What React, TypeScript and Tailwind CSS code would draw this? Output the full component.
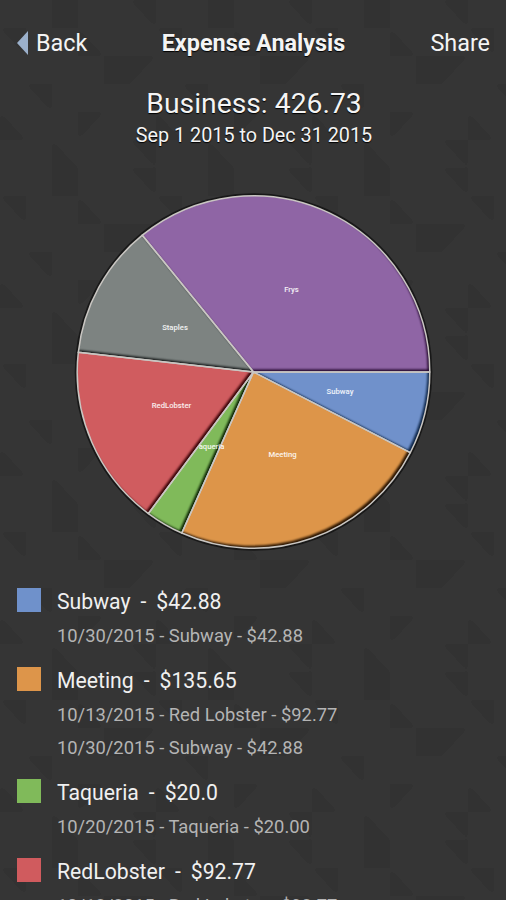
interface Expense {
  date: string
  name: string
  amount: string
}

interface Category {
  name: string
  total: string
  color: string
  shade: string
  start: number
  end: number
  labelX: number
  labelY: number
  expenses: Expense[]
}

const categories: Category[] = [
  {
    name: "Subway", total: "$42.88", color: "#6f91cb", shade: "#0c2446",
    start: 0, end: 27.2, labelX: 340, labelY: 393.5,
    expenses: [{ date: "10/30/2015", name: "Subway", amount: "$42.88" }],
  },
  {
    name: "Meeting", total: "$135.65", color: "#dd954a", shade: "#2a1400",
    start: 27.2, end: 114, labelX: 282.5, labelY: 456.5,
    expenses: [
      { date: "10/13/2015", name: "Red Lobster", amount: "$92.77" },
      { date: "10/30/2015", name: "Subway", amount: "$42.88" },
    ],
  },
  {
    name: "Taqueria", total: "$20.0", color: "#80ba5a", shade: "#0c2404",
    start: 114, end: 126.6, labelX: 209.5, labelY: 449,
    expenses: [{ date: "10/20/2015", name: "Taqueria", amount: "$20.00" }],
  },
  {
    name: "RedLobster", total: "$92.77", color: "#d05b5e", shade: "#3a0408",
    start: 126.6, end: 186.4, labelX: 171.5, labelY: 407.5,
    expenses: [{ date: "10/13/2015", name: "Red Lobster", amount: "$92.77" }],
  },
  {
    name: "Staples", total: "$70.43", color: "#7d8381", shade: "#101414",
    start: 186.4, end: 230.9, labelX: 175, labelY: 329.5,
    expenses: [],
  },
  {
    name: "Frys", total: "$200.77", color: "#8f65a5", shade: "#1e0428",
    start: 230.9, end: 360, labelX: 291.5, labelY: 291.5,
    expenses: [],
  },
]

const CX = 253.5
const CY = 372
const R = 176.3

function point(deg: number) {
  const rad = (deg * Math.PI) / 180
  return `${(CX + R * Math.cos(rad)).toFixed(2)} ${(CY + R * Math.sin(rad)).toFixed(2)}`
}

function slicePath(c: Category) {
  return `M${CX} ${CY} L${point(c.start)} A${R} ${R} 0 0 1 ${point(c.end)} Z`
}

function Background() {
  return (
    <svg className="absolute inset-0 -z-10 h-full w-full" aria-hidden="true">
      <defs>
        <pattern id="tiles" width="156" height="168" patternUnits="userSpaceOnUse">
          <rect width="156" height="168" fill="#353535" />
          <path fill="#323232" d="M0 28h26v28zM52 0h26v28H52zM78 28l26 28H78zM104 56h52l-26 28h-26zM26 84h26v28zM0 112l26 28H0zM78 112h26l-26 28zM130 140h26v28zM52 140l26 28H52zM130 0l26 28V0z" />
          <path fill="#363636" d="M26 28h26L26 56zM104 0v28L78 0zM52 56l26 28H52zM130 84h26v28zM0 140h26L0 168zM104 112l26 28h-26zM52 112h26v28z" />
        </pattern>
        <filter id="soften"><feGaussianBlur stdDeviation="2.5" /></filter>
      </defs>
      <rect x="-10" y="-10" width="526" height="920" fill="url(#tiles)" filter="url(#soften)" />
    </svg>
  )
}

function PieChart() {
  return (
    <svg viewBox="68 186 370 372" className="h-[372px] w-[370px]">
      <defs>
        <filter id="bevel" x="-10%" y="-10%" width="120%" height="120%">
          <feGaussianBlur stdDeviation="0.9" />
        </filter>
        {categories.map((c) => (
          <clipPath key={c.name} id={`clip-${c.name}`}>
            <path d={slicePath(c)} />
          </clipPath>
        ))}
      </defs>
      <circle cx={CX} cy={CY} r={R + 1} fill="none" stroke="#181818" strokeWidth="3" />
      {categories.map((c) => (
        <g key={c.name} clipPath={`url(#clip-${c.name})`}>
          <path d={slicePath(c)} fill={c.shade} />
          <path d={slicePath(c)} fill={c.color} transform="translate(-2.2 -2.5)" filter="url(#bevel)" />
        </g>
      ))}
      {categories.map((c) => (
        <path key={c.name} d={slicePath(c)} fill="none" stroke="#c9c6c2" strokeWidth="1.5" strokeLinejoin="round" />
      ))}
      {categories.map((c) => (
        <text key={c.name} x={c.labelX} y={c.labelY} textAnchor="middle"
          clipPath={c.name === "Taqueria" ? "inset(0 0 0 4.5px)" : undefined}
          className="fill-white/90 text-[7.7px] font-medium"
        >
          {c.name}
        </text>
      ))}
    </svg>
  )
}

function CategoryRow({ category }: { category: Category }) {
  return (
    <li className="flex items-start gap-4 pb-[13px]">
      <span className="mt-[3px] h-6 w-6 shrink-0" style={{ backgroundColor: category.color }} />
      <div>
        <h2 className="flex h-[33px] items-center gap-[10px] text-[21.2px] leading-none text-[#f0f0f0]">
          <span>{category.name}</span>
          <span>-</span>
          <span>{category.total}</span>
        </h2>
        {category.expenses.map((e) => (
          <p key={e.date + e.name} className="flex h-[33px] items-center pt-1 text-[18.35px] leading-none whitespace-nowrap text-[#b4b4b4]">
            {e.date} - {e.name} - {e.amount}
          </p>
        ))}
      </div>
    </li>
  )
}

export default function App() {
  return (
    <div className="relative isolate flex h-[900px] w-[506px] flex-col overflow-hidden bg-[#343434] font-['Roboto',sans-serif] text-[#f4f4f4]">
      <Background />
      <header className="grid grid-cols-[1fr_auto_1fr] items-center pt-7 pr-4 pl-[17px] text-[23.4px] leading-[30px] text-shadow-[0_1px_1px_#000]">
        <button className="flex items-center gap-2 text-left">
          <svg viewBox="0 0 11 24" className="h-6 w-[11px]">
            <path d="M11 0v24L0 12z" fill="#9bb0cb" />
          </svg>
          Back
        </button>
        <h1 className="font-bold">Expense Analysis</h1>
        <button className="text-right">Share</button>
      </header>

      <section className="flex flex-col items-center pt-[28px] pl-[2px] text-shadow-[0_1px_1px_#000]">
        <p className="text-[28.3px] leading-9">Business: 426.73</p>
        <p className="text-[19.8px] leading-7">Sep 1 2015 to Dec 31 2015</p>
      </section>

      <div className="flex justify-center pt-9">
        <PieChart />
      </div>

      <ul className="px-[17px] pt-[27px]">
        {categories.slice(0, 4).map((c) => (
          <CategoryRow key={c.name} category={c} />
        ))}
      </ul>
    </div>
  )
}
